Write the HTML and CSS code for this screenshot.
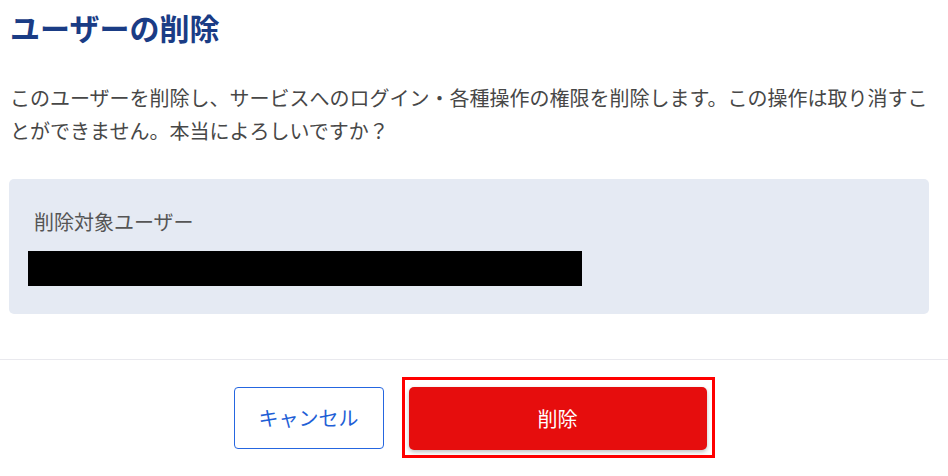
FILE: index.html
```html
<!DOCTYPE html>
<html lang="ja">
<head>
  <meta charset="UTF-8">
  <title>ユーザーの削除</title>
  <meta name="viewport" content="width=device-width, initial-scale=1.0">
  <link rel="stylesheet" href="styles.css">
</head>
<body>
  <div class="dialogo">
    <div class="conteudo">
      <h1 class="titulo">ユーザーの削除</h1>
      <p class="mensagem">このユーザーを削除し、サービスへのログイン・各種操作の権限を削除します。この操作は取り消すことができません。本当によろしいですか？</p>
      <div class="alvo">
        <div class="alvo-rotulo">削除対象ユーザー</div>
        <div class="alvo-nome"></div>
      </div>
    </div>
    <div class="rodape">
      <button class="btn-cancelar">キャンセル</button>
      <span class="destaque">
        <button class="btn-excluir">削除</button>
      </span>
    </div>
  </div>
</body>
</html>
```

FILE: styles.css
```css
body {
  margin: 0;
  background: #fff;
  font-family: "Noto Sans CJK JP", "Noto Sans", sans-serif;
  color: #444;
}
.conteudo {
  padding: 0 19px 0 9px;
}
.titulo {
  margin: 0 0 0 1px;
  padding-top: 5px;
  font-size: 30px;
  line-height: 44px;
  font-weight: 700;
  color: #1a3c85;
}
.mensagem {
  margin: 32px -2px 32px 1px;
  font-size: 20px;
  line-height: 33px;
  color: #474747;
}
.alvo {
  background: #e5eaf3;
  border-radius: 5px;
  padding: 28px 19px 28px 19px;
}
.alvo-rotulo {
  padding-left: 6px;
  font-size: 20px;
  line-height: 30px;
  color: #555;
}
.alvo-nome {
  margin-top: 14px;
  width: 554px;
  height: 35px;
  background: #000;
}
.rodape {
  margin-top: 45px;
  border-top: 1px solid #e9e9ee;
  padding-top: 17px;
  display: flex;
  justify-content: center;
  align-items: center;
  gap: 18px;
}
button {
  font-family: inherit;
  font-size: 20px;
  cursor: pointer;
  box-sizing: border-box;
}
.btn-cancelar {
  width: 150px;
  height: 62px;
  background: #fff;
  color: #1f5fd6;
  border: 1px solid #2566e0;
  border-radius: 4px;
}
.destaque {
  display: block;
  border: 3px solid #ff0000;
  padding: 7px 5px 5px 4px;
}
.btn-excluir {
  display: block;
  width: 298px;
  height: 63px;
  background: #e60d0d;
  color: #fff;
  border: none;
  border-radius: 5px;
  box-shadow: 0 2px 4px rgba(0, 0, 0, 0.25);
}
```
